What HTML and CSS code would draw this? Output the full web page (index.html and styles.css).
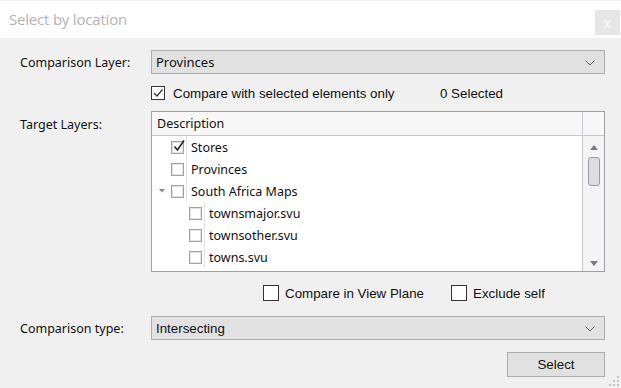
FILE: index.html
```html
<!DOCTYPE html>
<html>
<head>
<meta charset="utf-8">
<link rel="stylesheet" href="styles.css">
</head>
<body>
<div class="dialog">
  <div class="titlebar">
    <span class="title">Select by location</span>
    <span class="close">x</span>
  </div>
  <div class="content">
    <div class="row r-layer">
      <span class="label">Comparison Layer:</span>
      <div class="combo"><span>Provinces</span><svg class="chev" width="10" height="6" viewBox="0 0 10 6"><path d="M0.5 0.5 L5 5 L9.5 0.5" fill="none" stroke="#666" stroke-width="1"/></svg></div>
    </div>
    <div class="row r-sel">
      <span class="label"></span>
      <div class="selline">
        <span class="cb cb-dark"><svg width="12" height="12" viewBox="0 0 12 12"><path d="M2 6 L5 9 L10.5 2.5" fill="none" stroke="#333" stroke-width="1.2"/></svg></span>
        <span class="seltext">Compare with selected elements only</span>
        <span class="count">0 Selected</span>
      </div>
    </div>
    <div class="row r-tree">
      <span class="label lbl-top">Target Layers:</span>
      <div class="tree">
        <div class="thead">Description</div>
        <div class="thead-sb"></div>
        <div class="tbody">
          <div class="trow">
            <span class="exp"></span>
            <span class="tcb checked"><svg width="14" height="14" viewBox="0 0 14 14"><path d="M2.5 7.5 L5.5 11 L12 1.5" fill="none" stroke="#222" stroke-width="1.6"/></svg></span>
            <span class="ttext">Stores</span>
          </div>
          <div class="trow">
            <span class="exp"></span>
            <span class="tcb"></span>
            <span class="ttext">Provinces</span>
          </div>
          <div class="trow">
            <span class="exp"><svg width="6" height="4" viewBox="0 0 6 4"><path d="M0 0 L6 0 L3 3.5 Z" fill="#8a8a8a"/></svg></span>
            <span class="tcb"></span>
            <span class="ttext">South Africa Maps</span>
          </div>
          <div class="trow child">
            <span class="exp"></span>
            <span class="tcb"></span>
            <span class="ttext">townsmajor.svu</span>
          </div>
          <div class="trow child">
            <span class="exp"></span>
            <span class="tcb"></span>
            <span class="ttext">townsother.svu</span>
          </div>
          <div class="trow child">
            <span class="exp"></span>
            <span class="tcb"></span>
            <span class="ttext">towns.svu</span>
          </div>
        </div>
        <div class="sb">
          <svg class="arrow" width="8" height="5" viewBox="0 0 8 5"><path d="M0 5 L8 5 L4 0 Z" fill="#7a7a86"/></svg>
          <div class="thumb"></div>
          <div class="sb-fill"></div>
          <svg class="arrow" width="8" height="5" viewBox="0 0 8 5"><path d="M0 0 L8 0 L4 5 Z" fill="#7a7a86"/></svg>
        </div>
      </div>
    </div>
    <div class="row r-opts">
      <span class="label"></span>
      <div class="opts">
        <span class="opt"><span class="cb cb-big"></span><span>Compare in View Plane</span></span>
        <span class="opt"><span class="cb cb-big"></span><span>Exclude self</span></span>
      </div>
    </div>
    <div class="row r-type">
      <span class="label">Comparison type:</span>
      <div class="combo"><span class="arial">Intersecting</span><svg class="chev" width="10" height="6" viewBox="0 0 10 6"><path d="M0.5 0.5 L5 5 L9.5 0.5" fill="none" stroke="#666" stroke-width="1"/></svg></div>
    </div>
    <div class="btnrow">
      <button class="btn">Select</button>
    </div>
  </div>
  <div class="grip">
    <i style="right:2px;bottom:2px"></i><i style="right:6px;bottom:2px"></i><i style="right:10px;bottom:2px"></i>
    <i style="right:2px;bottom:6px"></i><i style="right:6px;bottom:6px"></i><i style="right:2px;bottom:10px"></i>
  </div>
</div>
</body>
</html>
```
FILE: styles.css
```css
* { box-sizing: border-box; }
html, body { margin: 0; padding: 0; }
body {
  width: 621px;
  height: 388px;
  overflow: hidden;
  background: #f0f0f0;
  font-family: "Liberation Sans", Arial, sans-serif;
  font-size: 13.33px;
  color: #111;
}
.dialog { position: relative; width: 621px; height: 388px; padding-top: 1px; }
.titlebar {
  height: 37px;
  background: #fff;
  display: flex;
  align-items: center;
  justify-content: space-between;
  padding-left: 9px;
  padding-right: 1px;
}
.title {
  font-family: "Open Sans", "Noto Sans", sans-serif;
  font-size: 15px;
  color: #b3b3b3;
  letter-spacing: -0.2px;
  margin-top: -1px;
}
.close {
  width: 25px;
  height: 25px;
  margin-top: 5px;
  background: #e6e6e6;
  color: #fafafa;
  font-family: "Open Sans", sans-serif;
  font-size: 15px;
  display: flex;
  align-items: center;
  justify-content: center;
}
.content { padding: 12px 16px 0 20px; }
.row { display: grid; grid-template-columns: 131px 1fr; align-items: center; }
.label {
  font-family: "Noto Sans", "Open Sans", sans-serif;
  font-size: 12.5px;
  color: #111;
}
.lbl-top { align-self: start; margin-top: 5px; }
.combo {
  height: 24px;
  background: #e1e1e1;
  border: 1px solid #adadad;
  display: flex;
  align-items: center;
  justify-content: space-between;
  padding: 0 9px 0 4px;
  font-family: "Noto Sans", sans-serif;
  font-size: 13px;
}
.combo .arial { font-family: "Liberation Sans", sans-serif; font-size: 13.33px; }
.chev { margin-top: 1px; }
.r-sel { margin-top: 12px; }
.selline { display: flex; align-items: center; height: 14px; }
.cb {
  display: inline-flex;
  align-items: center;
  justify-content: center;
  flex: none;
  background: #fff;
  border: 1px solid #333;
}
.cb-dark { width: 14px; height: 14px; }
.seltext { margin-left: 8px; width: 267px; }
.r-tree { margin-top: 11px; align-items: start; }
.tree {
  height: 161px;
  border: 1px solid #a0a0a0;
  display: grid;
  grid-template-columns: 1fr 22px;
  grid-template-rows: 24px 1fr;
  background: #fff;
  font-family: "Noto Sans", "Open Sans", sans-serif;
  font-size: 12.5px;
  color: #111;
}
.thead {
  background: #f7f7f7;
  border-bottom: 1px solid #c8c8d0;
  padding-left: 5px;
  display: flex;
  align-items: center;
}
.thead-sb {
  background: #f7f7f7;
  border-bottom: 1px solid #c8c8d0;
  border-left: 1px solid #c8c8d0;
}
.tbody { display: flex; flex-direction: column; }
.trow { height: 22px; display: flex; align-items: stretch; }
.exp { width: 19px; flex: none; display: flex; align-items: center; justify-content: center; }
.tcb {
  width: 13px;
  height: 13px;
  flex: none;
  align-self: center;
  border: 1px solid #a2a2a2;
  background: #fff;
  box-shadow: inset 0 0 0 1px #e4e4e4;
  position: relative;
}
.tcb.checked svg { position: absolute; left: 0; bottom: 0; }
.ttext {
  margin-left: 2px;
  padding-left: 4px;
  border-left: 1px solid #e2e2e2;
  display: flex;
  align-items: center;
  flex: 1;
}
.trow.child .exp { width: 37px; }
.sb {
  background: #f4f4f6;
  border-left: 1px solid #c8c8d0;
  display: flex;
  flex-direction: column;
  align-items: center;
  padding: 9px 0 5px;
}
.thumb {
  width: 12px;
  height: 29px;
  margin-top: 7px;
  border: 1px solid #9a9aa6;
  border-radius: 3px;
  background: #dcdce2;
}
.sb-fill { flex: 1; }
.r-opts { margin-top: 13px; }
.opts { display: flex; align-items: center; padding-left: 112px; height: 16px; }
.opt { display: flex; align-items: center; gap: 6px; }
.opt + .opt { margin-left: 27px; }
.cb-big { width: 16px; height: 16px; }
.r-type { margin-top: 15px; }
.r-type .combo { height: 24px; }
.btnrow { display: flex; justify-content: flex-end; margin-top: 12px; }
.btn {
  width: 98px;
  height: 25px;
  background: #e1e1e1;
  border: 1px solid #adadad;
  font-family: "Liberation Sans", Arial, sans-serif;
  font-size: 13.33px;
  color: #111;
  padding: 0;
}
.grip { position: absolute; right: 0; bottom: 0; width: 14px; height: 14px; }
.grip i { position: absolute; width: 2px; height: 2px; background: #c4c4c4; }
```
